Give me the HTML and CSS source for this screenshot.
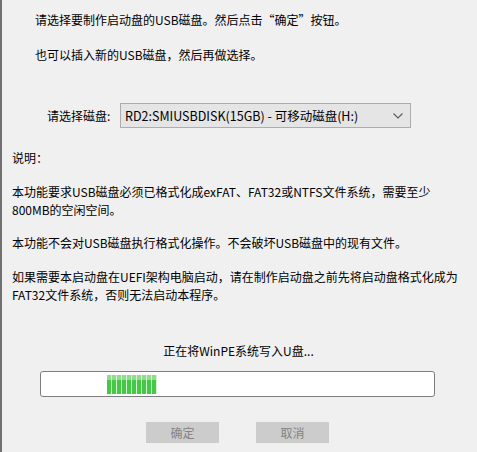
FILE: index.html
```html
<!DOCTYPE html>
<html lang="zh-CN">
<head>
<meta charset="utf-8">
<title>制作启动盘</title>
<link rel="stylesheet" href="styles.css">
</head>
<body>
<div class="window">
  <p class="intro first">请选择要制作启动盘的USB磁盘。然后点击“确定”按钮。</p>
  <p class="intro second">也可以插入新的USB磁盘，然后再做选择。</p>

  <div class="select-row">
    <span class="select-label">请选择磁盘:</span>
    <div class="select">
      <span class="select-value">RD2:SMIUSBDISK(15GB) - 可移动磁盘(H:)</span>
      <svg class="chevron" width="10" height="6" viewBox="0 0 10 6"><path d="M0.5 0.5 L5 5 L9.5 0.5" fill="none" stroke="#5a5a5a" stroke-width="1.1"/></svg>
    </div>
  </div>

  <p class="note-title">说明：</p>
  <p class="note p1">本功能要求USB磁盘必须已格式化成exFAT、FAT32或NTFS文件系统，需要至少<br>800MB的空闲空间。</p>
  <p class="note p2">本功能不会对USB磁盘执行格式化操作。不会破坏USB磁盘中的现有文件。</p>
  <p class="note p3">如果需要本启动盘在UEFI架构电脑启动，请在制作启动盘之前先将启动盘格式化成为<br>FAT32文件系统，否则无法启动本程序。</p>

  <p class="status">正在将WinPE系统写入U盘...</p>
  <div class="progress">
    <div class="progress-chunk"></div>
  </div>

  <div class="buttons">
    <button class="btn" disabled>确定</button>
    <button class="btn" disabled>取消</button>
  </div>
</div>
</body>
</html>
```

FILE: styles.css
```css
html, body {
  margin: 0;
  padding: 0;
  background: #f0f0f0;
}
body {
  font-family: "Noto Sans CJK SC", "Noto Sans", sans-serif;
  font-size: 12px;
  line-height: 18px;
  color: #000;
}
.window {
  width: 477px;
  height: 452px;
  box-sizing: border-box;
  border-left: 2px solid #707070;
  padding-top: 11px;
  overflow: hidden;
}
p { margin: 0; }
.intro { padding-left: 33px; }
.second { margin-top: 17px; }

.select-row {
  display: flex;
  align-items: center;
  margin-top: 39px;
  height: 25px;
}
.select-label {
  margin-left: 45px;
  width: 73px;
}
.select {
  box-sizing: border-box;
  width: 291px;
  height: 25px;
  border: 1px solid #adadad;
  background: #e5e5e5;
  display: flex;
  align-items: center;
  justify-content: space-between;
  padding: 0 5px 0 4px;
}
.select-value { font-size: 12.5px; }
.chevron { margin-right: 2px; }

.note-title { margin-top: 21px; padding-left: 10px; }
.note { padding-left: 10px; }
.p1 { margin-top: 16px; }
.p2 { margin-top: 15px; }
.p3 { margin-top: 16px; }

.status {
  margin-top: 38px;
  text-align: center;
  padding-right: 2px;
}
.progress {
  box-sizing: border-box;
  margin: 11px 0 0 38px;
  width: 395px;
  height: 26px;
  border: 1px solid #7d7d7d;
  border-radius: 3px;
  background: #fff;
  padding: 3px 0 0 66px;
}
.progress-chunk {
  width: 50px;
  height: 19px;
  background:
    repeating-linear-gradient(to right, transparent 0, transparent 4px, #d6f3d6 4px, #d6f3d6 5px),
    linear-gradient(to bottom, #8fdc8f 0, #8fdc8f 5px, #45c845 5px, #45c845 100%);
}

.buttons {
  display: flex;
  margin: 25px 0 0 144px;
  gap: 37px;
}
.btn {
  width: 73px;
  height: 21px;
  border: none;
  background: #cccccc;
  color: #838383;
  font-family: "Noto Sans CJK SC", "Noto Sans", sans-serif;
  font-size: 12px;
  padding: 0;
  line-height: 21px;
}
```
